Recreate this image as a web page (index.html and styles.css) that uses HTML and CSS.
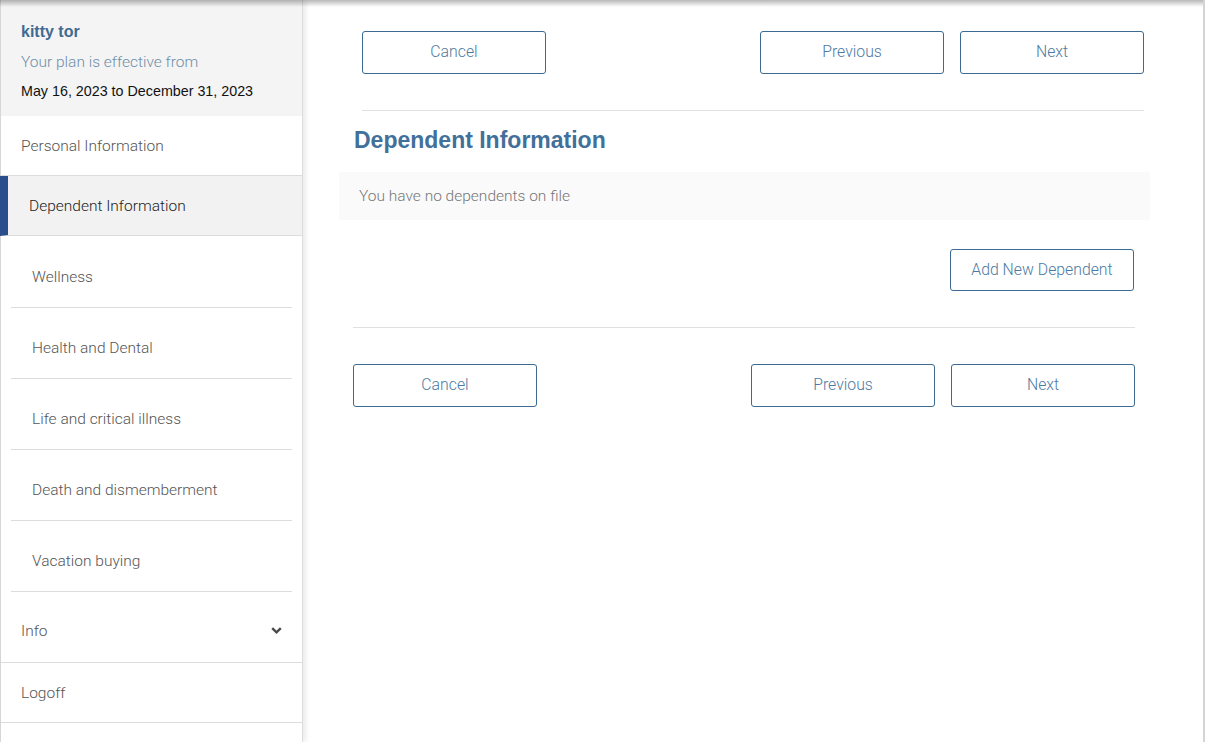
FILE: index.html
```html
<!DOCTYPE html>
<html lang="en">
<head>
<meta charset="utf-8">
<title>Dependent Information</title>
<link rel="stylesheet" href="styles.css">
</head>
<body>
<div class="app">
  <aside class="sidebar">
    <div class="profile">
      <div class="profile-name">kitty tor</div>
      <div class="profile-plan">Your plan is effective from</div>
      <div class="profile-dates">May 16, 2023 to December 31, 2023</div>
    </div>
    <nav class="nav">
      <a class="nav-item">Personal Information</a>
      <a class="nav-item active">Dependent Information</a>
      <div class="subnav">
        <a class="sub-item">Wellness</a>
        <a class="sub-item">Health and Dental</a>
        <a class="sub-item">Life and critical illness</a>
        <a class="sub-item">Death and dismemberment</a>
        <a class="sub-item">Vacation buying</a>
      </div>
      <a class="nav-item info">Info
        <svg class="chev" width="11" height="7" viewBox="0 0 11 7"><path d="M1.2 1.2 L5.5 5.3 L9.8 1.2" fill="none" stroke="#4a4a4a" stroke-width="2.4"/></svg>
      </a>
      <a class="nav-item logoff">Logoff</a>
    </nav>
  </aside>
  <main class="main">
    <div class="actions top">
      <button class="btn">Cancel</button>
      <div class="actions-right">
        <button class="btn">Previous</button>
        <button class="btn">Next</button>
      </div>
    </div>
    <hr class="rule top-rule">
    <h1 class="title">Dependent Information</h1>
    <div class="empty">You have no dependents on file</div>
    <div class="add-row">
      <button class="btn">Add New Dependent</button>
    </div>
    <hr class="rule">
    <div class="actions bottom">
      <button class="btn">Cancel</button>
      <div class="actions-right">
        <button class="btn">Previous</button>
        <button class="btn">Next</button>
      </div>
    </div>
  </main>
</div>
</body>
</html>
```
FILE: styles.css
```css
* { box-sizing: border-box; }
html, body { margin: 0; padding: 0; height: 100%; }
body {
  font-family: Roboto, "Liberation Sans", Arial, sans-serif;
  font-weight: 300;
  background: #fff;
  color: #555;
}
.app {
  position: relative;
  display: flex;
  width: 1205px;
  min-height: 742px;
  border-right: 2px solid #d4d4d4;
}
.app::before {
  content: "";
  position: absolute;
  left: 0; right: 0; top: 0;
  height: 7px;
  background: linear-gradient(rgba(0,0,0,0.28), rgba(0,0,0,0));
  z-index: 5;
  pointer-events: none;
}
.sidebar {
  width: 303px;
  flex: none;
  border-left: 1px solid #d6d6d6;
  border-right: 1px solid #dcdcdc;
  box-shadow: 3px 0 5px rgba(0,0,0,0.08);
  position: relative;
  z-index: 2;
  background: #fff;
}
.profile {
  background: #f4f4f4;
  height: 116px;
  padding: 22px 0 0 20px;
}
.profile-name {
  font-family: "Liberation Sans", Arial, sans-serif;
  font-weight: 700;
  font-size: 16px;
  color: #3f6b92;
  line-height: 19px;
}
.profile-plan {
  font-size: 15.5px;
  color: #6f8ea9;
  line-height: 20px;
  margin-top: 11px;
}
.profile-dates {
  font-family: "Liberation Sans", Arial, sans-serif;
  font-size: 14.3px;
  font-weight: 400;
  color: #111;
  line-height: 16px;
  margin-top: 11px;
}
.nav { display: flex; flex-direction: column; }
.nav-item {
  display: flex;
  align-items: center;
  justify-content: space-between;
  height: 60px;
  padding: 0 20px 0 20px;
  font-size: 15.5px;
  color: #555;
  border-bottom: 1px solid #dcdcdc;
}
.nav-item.active {
  background: #f2f2f2;
  border-left: 8px solid #2a4e8c;
  padding-left: 21px;
  color: #222;
  margin-left: -1px;
}
.nav-item.info { height: 71px; padding-top: 7px; }
.subnav {
  display: flex;
  flex-direction: column;
  padding: 1px 10px 0;
}
.sub-item {
  display: flex;
  align-items: center;
  height: 71px;
  padding: 10px 0 0 21px;
  font-size: 15.5px;
  color: #555;
  border-bottom: 1px solid #dcdcdc;
}
.chev { display: block; }
.main {
  flex: 1;
  padding: 31px 0 0 50px;
}
.actions {
  display: flex;
  justify-content: space-between;
  width: 782px;
}
.actions.top { margin-left: 9px; }
.actions.bottom { margin-top: 36px; }
.actions-right { display: flex; gap: 16px; }
.btn {
  width: 184px;
  height: 43px;
  border: 1px solid #3b6a92;
  border-radius: 3px;
  background: #fff;
  color: #4d7aa2;
  font-family: Roboto, "Liberation Sans", Arial, sans-serif;
  font-weight: 300;
  font-size: 15.8px;
  padding: 0 0 2px;
  cursor: pointer;
}
.rule {
  border: 0;
  border-top: 1px solid #e0e0e0;
  margin: 36px 0 0 0;
  width: 782px;
}
.rule.top-rule { margin-left: 9px; }
.title {
  font-family: "Liberation Sans", Arial, sans-serif;
  font-size: 23px;
  font-weight: 700;
  color: #41709a;
  margin: 15px 0 0 1px;
  line-height: 28px;
}
.empty {
  background: #fafafa;
  margin: 18px 0 0 -14px;
  width: 811px;
  height: 48px;
  padding: 0 0 0 20px;
  display: flex;
  align-items: center;
  font-size: 15.5px;
  color: #777;
}
.add-row {
  display: flex;
  justify-content: flex-end;
  width: 781px;
  margin-top: 29px;
}
.add-row .btn { width: 184px; height: 42px; }
```
